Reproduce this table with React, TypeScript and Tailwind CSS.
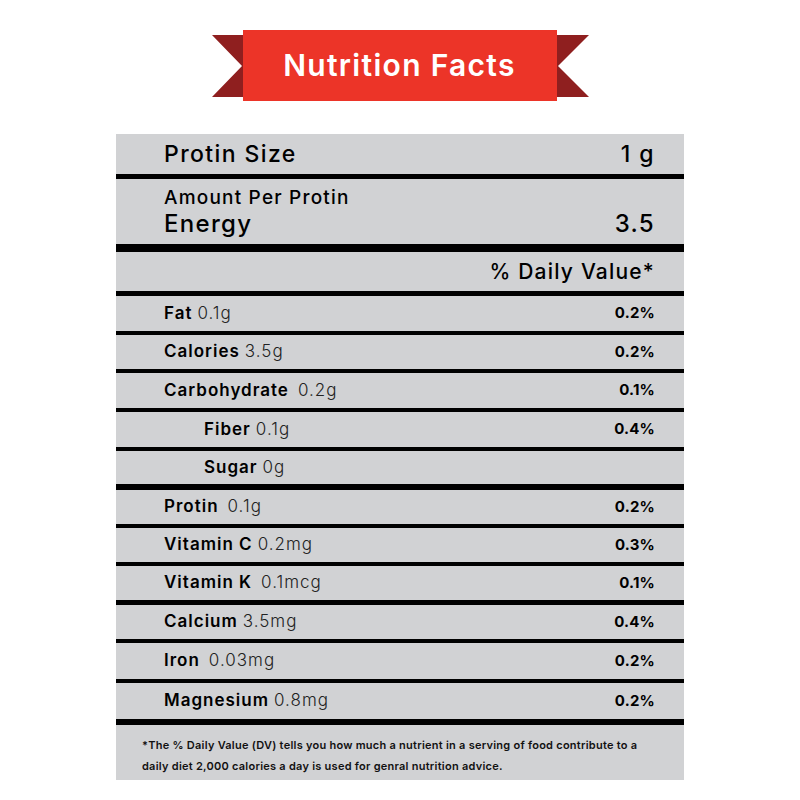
import React from 'react';

type Nutrient = {
  name: string;
  amount: string;
  dv?: string;
  indent?: boolean;
  gap?: boolean;
  h: string;
  border: string;
};

const nutrients: Nutrient[] = [
  { name: 'Fat', amount: '0.1g', dv: '0.2%', h: 'h-[39px]', border: 'border-b-4' },
  { name: 'Calories', amount: '3.5g', dv: '0.2%', h: 'h-[38px]', border: 'border-b-4' },
  { name: 'Carbohydrate', amount: '0.2g', dv: '0.1%', gap: true, h: 'h-[39px]', border: 'border-b-4' },
  { name: 'Fiber', amount: '0.1g', dv: '0.4%', indent: true, h: 'h-[39px]', border: 'border-b-4' },
  { name: 'Sugar', amount: '0g', indent: true, h: 'h-[39px]', border: 'border-b-[6px]' },
  { name: 'Protin', amount: '0.1g', dv: '0.2%', gap: true, h: 'h-[38px]', border: 'border-b-4' },
  { name: 'Vitamin C', amount: '0.2mg', dv: '0.3%', h: 'h-[38px]', border: 'border-b-4' },
  { name: 'Vitamin K', amount: '0.1mcg', dv: '0.1%', gap: true, h: 'h-[39px]', border: 'border-b-[5px]' },
  { name: 'Calcium', amount: '3.5mg', dv: '0.4%', h: 'h-[38px]', border: 'border-b-4' },
  { name: 'Iron', amount: '0.03mg', dv: '0.2%', gap: true, h: 'h-[40px]', border: 'border-b-4' },
  { name: 'Magnesium', amount: '0.8mg', dv: '0.2%', h: 'h-[42px]', border: 'border-b-[6px]' },
];

const Banner: React.FC = () => (
  <div className="flex items-center justify-center pt-[30px]">
    <svg width="31" height="62" viewBox="0 0 31 62" className="shrink-0">
      <polygon points="0,0 31,0 31,62 0,62 30,31" fill="#8f1f1f" />
    </svg>
    <div className="flex h-[71px] w-[314px] items-center justify-center bg-[#ec3428]">
      <span className="text-[30px] font-semibold tracking-[1.3px] text-white">Nutrition Facts</span>
    </div>
    <svg width="32" height="62" viewBox="0 0 32 62" className="shrink-0">
      <polygon points="0,0 32,0 1,31 32,62 0,62" fill="#8f1f1f" />
    </svg>
  </div>
);

const NutrientRow: React.FC<{ n: Nutrient }> = ({ n }) => (
  <div className={`flex items-center justify-between border-black pl-[48px] pr-[29px] ${n.h} ${n.border}`}>
    <div className={`flex items-baseline text-[17px] tracking-[1px] ${n.indent ? 'pl-[40px]' : ''}`}>
      <span className="font-semibold text-black">{n.name}</span>
      <span className={`font-light text-[#222] ${n.gap ? 'ml-[9px]' : 'ml-[5px]'}`}>{n.amount}</span>
    </div>
    {n.dv && <span className="text-[15px] font-bold tracking-[0.2px] text-black">{n.dv}</span>}
  </div>
);

export default function App() {
  return (
    <div className="min-h-[800px] w-[800px] bg-white" style={{ fontFamily: 'Inter, sans-serif' }}>
      <Banner />
      <div className="mx-auto mt-[33px] w-[568px] bg-[#d1d2d4] text-black">
        <div className="flex h-[45px] items-center justify-between border-b-[5px] border-black pl-[48px] pr-[29px] text-[23px] font-medium tracking-[1.4px]">
          <span>Protin Size</span>
          <span>1 g</span>
        </div>
        <div className="flex h-[73px] flex-col border-b-8 border-black pl-[48px] pr-[29px] pt-[7px]">
          <span className="text-[19px] font-medium leading-[24px] tracking-[1.2px]">Amount Per Protin</span>
          <div className="flex items-center justify-between text-[24px] font-medium leading-[28px] tracking-[1.3px]">
            <span>Energy</span>
            <span>3.5</span>
          </div>
        </div>
        <div className="flex h-[44px] items-center justify-end border-b-[5px] border-black pr-[29px] text-[21px] font-medium tracking-[1.2px]">
          % Daily Value*
        </div>
        {nutrients.map(n => (
          <NutrientRow key={n.name} n={n} />
        ))}
        <div className="h-[55px] pl-[26px] pt-[10px] text-[11px] font-semibold leading-[21px] tracking-[0.25px] text-[#111]">
          <p>*The % Daily Value (DV) tells you how much a nutrient in a serving of food contribute to a</p>
          <p>daily diet 2,000 calories a day is used for genral nutrition advice.</p>
        </div>
      </div>
    </div>
  );
}
